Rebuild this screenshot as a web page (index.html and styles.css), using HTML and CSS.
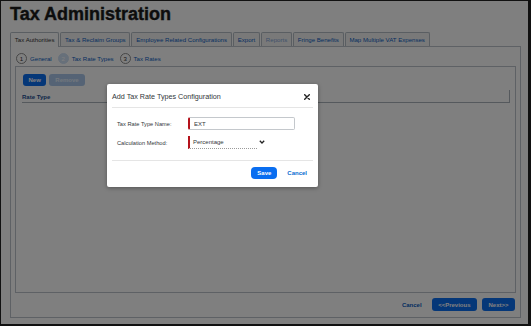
FILE: index.html
```html
<!DOCTYPE html>
<html lang="en">
<head>
    <meta charset="UTF-8">
    <title>Tax Administration</title>
    <link rel="stylesheet" href="styles.css">
</head>
<body>
  <div class="frame">
    <div class="page">
      <h1 class="title">Tax Administration</h1>
      <div class="tabs">
        <div class="tab active">Tax Authorities</div>
        <div class="tab">Tax &amp; Reclaim Groups</div>
        <div class="tab">Employee Related Configurations</div>
        <div class="tab">Export</div>
        <div class="tab disabled">Reports</div>
        <div class="tab">Fringe Benefits</div>
        <div class="tab">Map Multiple VAT Expenses</div>
      </div>
      <div class="panel">
        <div class="steps">
          <span class="step-num">1</span><span class="step-label">General</span>
          <span class="step-num current">2</span><span class="step-label">Tax Rate Types</span>
          <span class="step-num">3</span><span class="step-label">Tax Rates</span>
        </div>
        <div class="grid-box">
          <div class="toolbar">
            <button class="btn primary">New</button>
            <button class="btn off">Remove</button>
          </div>
          <div class="grid-head">Rate Type</div>
        </div>
        <div class="wizard-footer">
          <a class="link cancel">Cancel</a>
          <button class="btn primary wide">&lt;&lt;Previous</button>
          <button class="btn primary wide">Next&gt;&gt;</button>
        </div>
      </div>
    </div>

    <div class="overlay"></div>

    <div class="dialog">
      <div class="dialog-head">
        <span class="dialog-title">Add Tax Rate Types Configuration</span>
        <svg class="close" width="6" height="6" viewBox="0 0 6 6">
          <path d="M0.7 0.7 L5.3 5.3 M5.3 0.7 L0.7 5.3" stroke="#222" stroke-width="1.4" stroke-linecap="round"/>
        </svg>
      </div>
      <div class="dialog-body">
        <div class="form-row">
          <label class="form-label">Tax Rate Type Name:</label>
          <input class="text-field" type="text" value="EXT">
        </div>
        <div class="form-row">
          <label class="form-label">Calculation Method:</label>
          <div class="select-field">Percentage</div>
          <svg class="chev" width="6" height="4" viewBox="0 0 6 4">
            <path d="M0.8 0.8 L3 3 L5.2 0.8" fill="none" stroke="#222" stroke-width="1.3"/>
          </svg>
        </div>
      </div>
      <div class="dialog-foot">
        <button class="btn primary save">Save</button>
        <a class="link">Cancel</a>
      </div>
    </div>
  </div>
</body>
</html>
```

FILE: styles.css
```css
body {
    margin: 0;
    font-family: "Liberation Sans", Arial, sans-serif;
    background-color: #fff;
}
.frame {
    position: relative;
    width: 531px;
    height: 326px;
    box-sizing: border-box;
    border: 1px solid #111;
    border-right-width: 3px;
    border-bottom-width: 2px;
    background-color: #fff;
    overflow: hidden;
}
.page {
    padding: 2px 7px 0 9px;
}
.title {
    margin: 0;
    font-size: 18px;
    line-height: 22px;
    font-weight: 700;
    color: #1b1b1b;
    -webkit-text-stroke: 0.4px #1b1b1b;
}

/* tabs */
.tabs {
    display: flex;
    align-items: flex-end;
    margin-top: 7px;
}
.tab {
    height: 14px;
    box-sizing: border-box;
    padding: 0 3.8px;
    margin-right: 1px;
    border: 1px solid #b4bcc4;
    border-bottom: none;
    border-radius: 2px 2px 0 0;
    background-color: #f3f3f3;
    color: #0a5cc2;
    font-size: 6.1px;
    line-height: 13px;
    white-space: nowrap;
}
.tab.active {
    position: relative;
    height: 15px;
    margin-bottom: -1px;
    background-color: #fff;
    color: #333;
}
.tab.disabled {
    color: #7fa3d6;
}
.panel {
    border: 1px solid #bcc3ca;
    padding: 6px 4px 6px;
}

/* wizard steps */
.steps {
    display: flex;
    align-items: center;
    height: 11px;
    margin: 0 0 2px 1px;
    font-size: 6.1px;
}
.step-num {
    width: 11px;
    height: 11px;
    box-sizing: border-box;
    border: 1px solid #8d8d8d;
    border-radius: 50%;
    display: flex;
    align-items: center;
    justify-content: center;
    color: #333;
    background-color: #fff;
}
.step-num.current {
    background-color: #cfe0f5;
    border-color: #cfe0f5;
    color: #fff;
}
.step-label {
    margin: 0 6px 0 3px;
    color: #0a5cc2;
}

/* grid */
.grid-box {
    height: 227px;
    box-sizing: border-box;
    border: 1px solid #bcc3ca;
    padding: 7px 5px 0 6px;
}
.toolbar {
    display: flex;
    gap: 3px;
    margin-left: 1px;
}
.btn {
    height: 12px;
    padding: 0 5.5px;
    border: none;
    border-radius: 3px;
    font-family: "Liberation Sans", Arial, sans-serif;
    font-size: 6px;
    font-weight: 700;
    line-height: 12px;
    color: #fff;
    cursor: pointer;
}
.btn.primary {
    background-color: #0a6ef0;
}
.btn.off {
    padding: 0 6px;
    background-color: #abc7ea;
    color: #e4eefa;
}
.btn.wide {
    height: 13px;
    padding: 0 6.5px;
}
.grid-head {
    margin-top: 4px;
    height: 13px;
    box-sizing: border-box;
    padding-top: 3px;
    border-bottom: 1px solid #aab2ba;
    border-right: 1px solid #aab2ba;
    font-size: 6px;
    line-height: 8px;
    font-weight: 700;
    color: #1c4f94;
}
.wizard-footer {
    display: flex;
    justify-content: flex-end;
    align-items: center;
    gap: 5px;
    margin-top: 5px;
    padding-right: 1px;
}
.link {
    font-size: 6px;
    font-weight: 700;
    color: #0a6ed1;
    cursor: pointer;
}
.link.cancel {
    margin-right: 5px;
    color: #0a5cc2;
}

/* dialog */
.overlay {
    position: absolute;
    top: 0;
    left: 0;
    right: 0;
    bottom: 0;
    background-color: rgba(0, 0, 0, 0.5);
}
.dialog {
    position: absolute;
    left: 106px;
    top: 83px;
    width: 211px;
    height: 103px;
    box-sizing: border-box;
    background-color: #fff;
    border-radius: 2px;
    box-shadow: 0 1px 4px rgba(0, 0, 0, 0.35);
    color: #32363a;
}
.dialog-head {
    display: flex;
    justify-content: space-between;
    align-items: center;
    margin: 0 5px;
    padding: 8px 3px 5px 0;
    border-bottom: 1px solid #e5e5e5;
    font-size: 7.2px;
    line-height: 10px;
}
.dialog-title {
    color: #32363a;
}
.dialog-body {
    display: flex;
    flex-direction: column;
    gap: 6px;
    padding: 9px 0 11px 10px;
}
.form-row {
    display: flex;
    align-items: center;
    height: 13px;
}
.form-label {
    width: 71px;
    font-size: 5.7px;
    color: #32363a;
}
.text-field {
    width: 107px;
    height: 13px;
    box-sizing: border-box;
    margin: 0;
    padding: 0 0 0 4px;
    border: 1px solid #c4c8cc;
    border-left: 2px solid #b5121b;
    border-radius: 2px;
    font-family: "Liberation Sans", Arial, sans-serif;
    font-size: 6px;
    color: #32363a;
    outline: none;
}
.select-field {
    width: 69px;
    height: 13px;
    box-sizing: border-box;
    display: flex;
    align-items: center;
    padding-left: 3px;
    border-left: 2px solid #b5121b;
    border-bottom: 1px dotted #9a9a9a;
    font-size: 6px;
}
.chev {
    margin-left: 2px;
    margin-top: -1px;
}
.dialog-foot {
    display: flex;
    justify-content: flex-end;
    align-items: center;
    gap: 10px;
    margin: 0 5px;
    padding: 6px 6px 0 0;
    border-top: 1px solid #e5e5e5;
}
.btn.save {
    padding: 0 6px;
    border-radius: 4px;
}
```
